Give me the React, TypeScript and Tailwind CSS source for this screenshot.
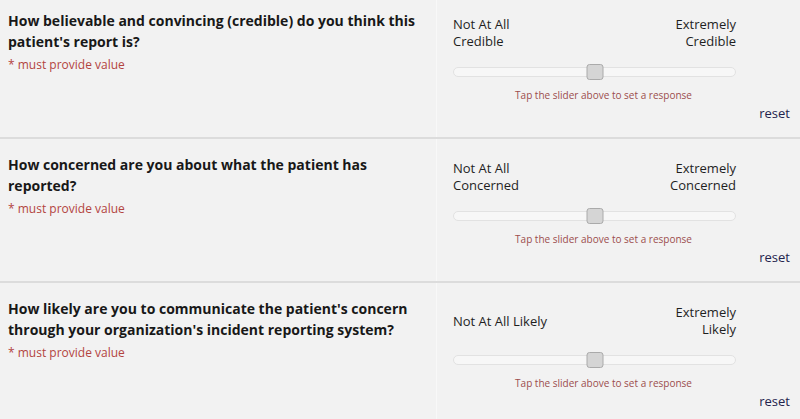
const questions = [
  {
    text: "How believable and convincing (credible) do you think this patient's report is?",
    low: 'Not At All Credible',
    high: 'Extremely Credible',
  },
  {
    text: 'How concerned are you about what the patient has reported?',
    low: 'Not At All Concerned',
    high: 'Extremely Concerned',
  },
  {
    text: "How likely are you to communicate the patient's concern through your organization's incident reporting system?",
    low: 'Not At All Likely',
    high: 'Extremely Likely',
  },
]

function Slider() {
  return (
    <div className="relative h-[10px] w-[283px] rounded-[5px] border border-[#e2e2e2] bg-[#f7f7f7]">
      <div className="absolute left-1/2 top-1/2 h-[16px] w-[17px] -translate-x-1/2 -translate-y-1/2 rounded-[3px] border border-[#aaaaaa] bg-[#d5d5d5]" />
    </div>
  )
}

function QuestionRow({ q, first }: { q: (typeof questions)[number]; first?: boolean }) {
  // the first row is cut off at the top of the screenshot
  return (
    <div className={`flex border-b-2 border-[#dcdcdc] ${first ? 'h-[139px]' : 'h-[144px]'}`}>
      <div className={`w-[436px] shrink-0 pl-2 pr-3 ${first ? 'pt-[10px]' : 'pt-[15px]'}`}>
        <p className="text-[14px] font-bold leading-[21px] text-[#181818]">{q.text}</p>
        <p className="mt-[3px] text-[12px] leading-[20px] text-[#b2443f]">* must provide value</p>
      </div>
      <div
        className={`flex-1 border-l border-[#f8f8f8] pl-4 pr-[10px] ${first ? 'pt-[16px]' : 'pt-[21px]'}`}
      >
        <div className="flex w-[283px] items-center justify-between text-[13px] leading-[17px] text-[#1f1f1f]">
          <span className="w-[100px]">{q.low}</span>
          <span className="w-[96px] text-right">{q.high}</span>
        </div>
        <div className="mt-[17px]">
          <Slider />
        </div>
        <p className="mt-[11px] w-[283px] pl-[18px] text-center text-[10px] leading-[15px] text-[#9c4d4d]">
          Tap the slider above to set a response
        </p>
        <div className="text-right text-[13px] leading-[20px] text-[#23234d]">reset</div>
      </div>
    </div>
  )
}

export default function App() {
  return (
    <div className="h-[419px] w-[800px] overflow-hidden bg-[#f2f2f2] font-['Open_Sans',sans-serif]">
      {questions.map((q, i) => (
        <QuestionRow key={i} q={q} first={i === 0} />
      ))}
    </div>
  )
}
